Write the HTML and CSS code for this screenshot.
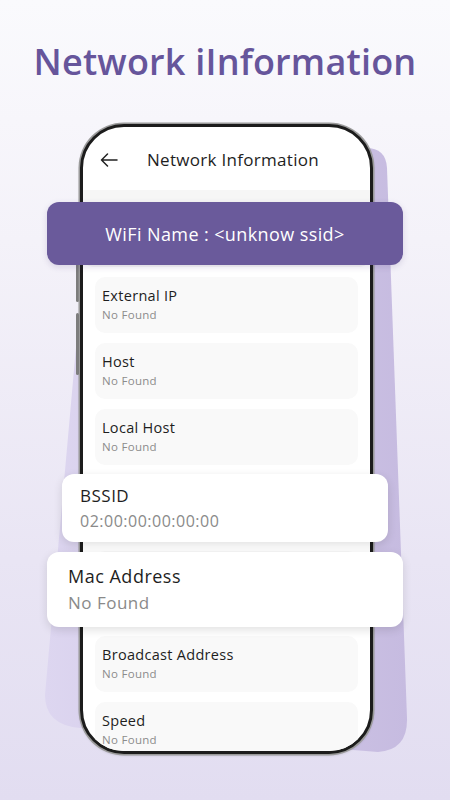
FILE: index.html
```html
<!DOCTYPE html>
<html lang="en">
<head>
<meta charset="utf-8">
<title>Network Information</title>
<link rel="stylesheet" href="styles.css">
</head>
<body>
<main class="page">
  <h1 class="headline">Network iInformation</h1>
  <section class="stage">
    <svg class="backdrop" width="450" height="680" viewBox="0 0 450 680" aria-hidden="true">
      <defs>
        <linearGradient id="bd" x1="0" y1="0" x2="1" y2="0">
          <stop offset="0" stop-color="#ddd6f0"/>
          <stop offset="1" stop-color="#c6bbe0"/>
        </linearGradient>
      </defs>
      <path d="M112 28 L366 28 Q386 28 387 48 L407 598 Q408 630 378 632 L80 608 Q45 605 45 575 L92 48 Q94 28 112 28 Z" fill="url(#bd)"/>
    </svg>
    <div class="phone-wrap">
      <div class="phone">
        <header class="app-bar">
          <svg class="back" width="18" height="14" viewBox="0 0 18 14" aria-hidden="true">
            <path d="M17 7 H1.5 M7.5 1 L1.5 7 L7.5 13" fill="none" stroke="#222" stroke-width="1.5" stroke-linecap="round" stroke-linejoin="round"/>
          </svg>
          <span class="app-title">Network Information</span>
        </header>
        <div class="list">
          <div class="card card-wifi"></div>
          <div class="card"><span class="c-title">External IP</span><span class="c-sub">No Found</span></div>
          <div class="card"><span class="c-title">Host</span><span class="c-sub">No Found</span></div>
          <div class="card"><span class="c-title">Local Host</span><span class="c-sub">No Found</span></div>
          <div class="card card-bssid"></div>
          <div class="card card-mac"></div>
          <div class="card"><span class="c-title">Broadcast Address</span><span class="c-sub">No Found</span></div>
          <div class="card"><span class="c-title">Speed</span><span class="c-sub">No Found</span></div>
        </div>
      </div>
    </div>
    <div class="banner">WiFi Name : &lt;unknow ssid&gt;</div>
    <div class="pop pop-bssid"><span class="p-title">BSSID</span><span class="p-sub">02:00:00:00:00:00</span></div>
    <div class="pop pop-mac"><span class="p-title">Mac Address</span><span class="p-sub">No Found</span></div>
  </section>
</main>
</body>
</html>
```

FILE: styles.css
```css
* { box-sizing: border-box; }
html, body { margin: 0; padding: 0; }
body {
  width: 450px;
  height: 800px;
  overflow: hidden;
  font-family: "Open Sans", "Noto Sans", sans-serif;
  background: linear-gradient(180deg, #fafafd 0%, #f4f2f9 30%, #e9e5f4 70%, #e2ddf1 100%);
}
.page {
  display: flex;
  flex-direction: column;
  align-items: center;
}
.headline {
  margin: 0;
  padding-top: 40px;
  height: 120px;
  line-height: 44px;
  font-size: 36px;
  font-weight: 600;
  letter-spacing: 0.2px;
  color: #66559b;
  text-align: center;
}
.stage {
  position: relative;
  width: 450px;
  height: 680px;
  display: flex;
  justify-content: center;
}
.backdrop {
  position: absolute;
  left: 0;
  top: 0;
}
.phone-wrap {
  position: relative;
  margin-top: 4px;
  margin-left: 3px;
  width: 293px;
  height: 630px;
}
.phone-wrap::before,
.phone-wrap::after {
  content: "";
  position: absolute;
  left: -4px;
  width: 3px;
  background: #7d7d7d;
  border-radius: 2px;
}
.phone-wrap::before { top: 134px; height: 44px; }
.phone-wrap::after { top: 189px; height: 62px; }
.phone {
  position: relative;
  width: 100%;
  height: 100%;
  border: 3px solid #1c1c1c;
  border-radius: 44px;
  box-shadow: 0 0 0 1.5px #9a9a9a, 0 1px 3px rgba(0,0,0,0.25);
  background: #fff;
  overflow: hidden;
  display: flex;
  flex-direction: column;
}
.app-bar {
  flex: none;
  height: 63px;
  display: flex;
  align-items: center;
  padding-left: 17px;
  padding-top: 2px;
}
.back { flex: none; }
.app-title {
  margin-left: 29px;
  font-size: 17px;
  letter-spacing: 0.3px;
  color: #1e1e1e;
}
.list {
  display: flex;
  flex-direction: column;
  gap: 10px;
  padding: 0 12px;
}
.card {
  flex: none;
  height: 56px;
  border-radius: 10px;
  background: #f9f9f9;
  padding: 10px 7px 0;
  display: flex;
  flex-direction: column;
}
.card-wifi { height: 77px; border-radius: 0 0 10px 10px; margin: 0 -12px; background: #f6f6f6; }
.card-bssid { height: 66px; }
.card-mac { height: 75px; }
.c-title {
  font-size: 14.5px;
  line-height: 18px;
  letter-spacing: 0.3px;
  color: #1e1e1e;
}
.c-sub {
  margin-top: 3px;
  font-size: 11.5px;
  line-height: 14px;
  letter-spacing: 0.3px;
  color: #8c8c8c;
}
.banner {
  position: absolute;
  left: 47px;
  top: 82px;
  width: 356px;
  height: 63px;
  border-radius: 12px;
  background: #6a5a9b;
  color: #fff;
  font-size: 18px;
  letter-spacing: 0.4px;
  display: flex;
  align-items: center;
  justify-content: center;
  box-shadow: 0 2px 6px rgba(60,40,110,0.15);
}
.pop {
  position: absolute;
  background: #fff;
  border-radius: 12px;
  box-shadow: 0 3px 10px rgba(0,0,0,0.12);
  display: flex;
  flex-direction: column;
}
.pop-bssid {
  left: 62px;
  top: 354px;
  width: 326px;
  height: 68px;
  padding: 12px 18px 0;
}
.pop-mac {
  left: 47px;
  top: 432px;
  width: 356px;
  height: 75px;
  padding: 13px 21px 0;
}
.p-title {
  font-size: 17px;
  line-height: 20px;
  letter-spacing: 0.5px;
  color: #1e1e1e;
}
.p-sub {
  margin-top: 5px;
  font-size: 16px;
  line-height: 20px;
  letter-spacing: 0.5px;
  color: #8a8a8a;
}
.pop-mac .p-title { font-size: 18px; line-height: 22px; }
.pop-mac .p-sub { font-size: 17px; line-height: 22px; margin-top: 5px; }
```
